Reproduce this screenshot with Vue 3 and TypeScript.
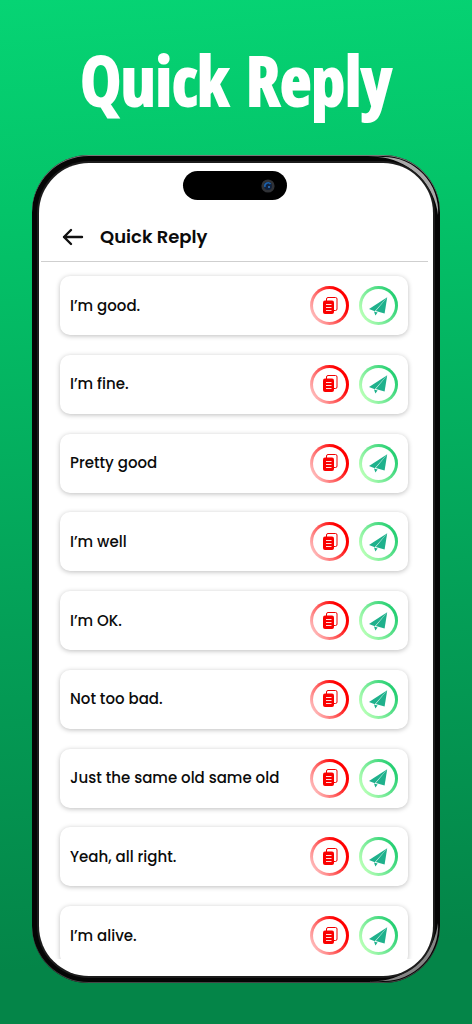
<script setup lang="ts">
import { ref } from 'vue'

const replies: string[] = [
  'I’m good.',
  'I’m fine.',
  'Pretty good',
  'I’m well',
  'I’m OK.',
  'Not too bad.',
  'Just the same old same old',
  'Yeah, all right.',
  'I’m alive.',
]

const selected = ref<string | null>(null)

function copyReply(text: string): void {
  selected.value = text
  void navigator.clipboard?.writeText(text)
}

function sendReply(text: string): void {
  selected.value = text
}
</script>

<template>
  <main class="page">
    <h1 class="headline">Quick Reply</h1>

    <section class="phone">
      <svg class="glare glare-top" viewBox="0 0 72 72" aria-hidden="true">
        <path d="M0 1L15 2A54.5 54.5 0 0 1 70 60A66 66 0 0 0 15 2.5Z" fill="#a8a8a8" />
      </svg>
      <svg class="glare glare-bottom" viewBox="0 0 72 72" aria-hidden="true">
        <path d="M0 1L15 2A54.5 54.5 0 0 1 70 60A66 66 0 0 0 15 2.5Z" fill="#858585" />
      </svg>

      <div class="screen">
        <div class="island">
          <svg class="lens" viewBox="0 0 14 14" aria-hidden="true">
            <circle cx="7" cy="7" r="6.6" fill="#303236" />
            <circle cx="7" cy="7" r="4" fill="#10213c" />
            <path d="M4 8A3.2 3.2 0 0 1 9.5 5" fill="none" stroke="#1c62ae" stroke-width="1.6" />
            <circle cx="8" cy="8" r="1" fill="#3279c4" />
          </svg>
        </div>

        <header class="bar">
          <button class="back" type="button" aria-label="Back">
            <svg viewBox="0 0 22 18" aria-hidden="true">
              <path
                d="M20 9H2M9 2L2 9L9 16"
                fill="none"
                stroke="#111"
                stroke-width="2.4"
                stroke-linecap="round"
                stroke-linejoin="round"
              />
            </svg>
          </button>
          <h2 class="title">Quick Reply</h2>
        </header>

        <div class="scroller">
          <ul class="list">
            <li v-for="reply in replies" :key="reply" class="card">
              <span class="text">{{ reply }}</span>
              <button
                class="action copy"
                type="button"
                :aria-label="`Copy ${reply}`"
                @click="copyReply(reply)"
              >
                <svg viewBox="0 0 20 20" aria-hidden="true">
                  <rect x="6.5" y="1.5" width="10.5" height="13" rx="1.5" fill="#fff" stroke="#f00000" />
                  <rect x="3" y="4.5" width="11" height="13.5" rx="2" fill="#fa0000" />
                  <path d="M6 8.5H11.5M6 11.5H11.5M6 14.5H11.5" stroke="#ffdede" stroke-width="1.1" />
                </svg>
              </button>
              <button
                class="action send"
                type="button"
                :aria-label="`Send ${reply}`"
                @click="sendReply(reply)"
              >
                <svg viewBox="0 0 20 20" aria-hidden="true">
                  <path d="M18.2 1.2L0 13L5.8 15.2Z" fill="#1fb18c" />
                  <path d="M18.2 1.2L6.8 15L15.6 17.6Z" fill="#1fb18c" />
                  <path d="M5 15.6L8.6 16.6L6.4 19.4Z" fill="#1fb18c" />
                </svg>
              </button>
            </li>
          </ul>
        </div>
      </div>
    </section>
  </main>
</template>

<style>
body {
  margin: 0;
}
</style>

<style scoped>
.page {
  box-sizing: border-box;
  min-height: 100vh;
  display: flex;
  flex-direction: column;
  padding: 38px 32px 41px;
  background: linear-gradient(176deg, #06d474 0%, #04c469 20%, #049f57 60%, #048548 92%, #048548 100%);
  font-family: Poppins, Inter, "Open Sans", sans-serif;
  color: #0b0b0b;
}

.headline {
  margin: 0 0 33px;
  font-family: "Open Sans Condensed", "Liberation Sans Narrow", "Noto Sans", sans-serif;
  font-size: 68px;
  line-height: 84px;
  font-weight: 700;
  text-align: center;
  white-space: nowrap;
  color: #fff;
  -webkit-text-stroke: 2px #fff;
}

.phone {
  position: relative;
  flex: 1;
  display: flex;
  box-sizing: border-box;
  padding: 8px 7px 7px;
  border-radius: 57px;
  background: #050505;
  box-shadow: inset 0 1px 0 #777, inset 0 -1px 0 #444;
}

.glare {
  position: absolute;
  right: 0;
  width: 72px;
  height: 72px;
}

.glare-top {
  top: 0;
}

.glare-bottom {
  bottom: 0;
  transform: scaleY(-1);
}

.screen {
  position: relative;
  flex: 1;
  min-width: 0;
  display: flex;
  flex-direction: column;
  box-sizing: border-box;
  padding: 50px 5px 17px 2px;
  border-radius: 50px;
  background: #fff;
  box-shadow: 0 0 0 2px #1c1c1c;
}

.island {
  position: absolute;
  top: 8px;
  left: 0;
  right: 2px;
  display: flex;
  align-items: center;
  justify-content: flex-end;
  box-sizing: border-box;
  width: 104px;
  height: 29px;
  margin: 0 auto;
  padding-right: 12px;
  border-radius: 15px;
  background: #000;
}

.lens {
  width: 14px;
  height: 14px;
}

.bar {
  display: flex;
  align-items: center;
  gap: 16px;
  height: 48px;
  padding: 0 21px;
  border-bottom: 1px solid #cfcfcf;
}

.back {
  display: flex;
  padding: 0;
  border: 0;
  background: none;
}

.back svg {
  width: 22px;
  height: 18px;
}

.title {
  margin: 0;
  font-size: 18px;
  line-height: 24px;
  font-weight: 600;
}

.scroller {
  flex: 1;
  display: flex;
  padding: 14px 20px 0 19px;
  overflow: hidden;
}

.list {
  flex: 1;
  display: flex;
  flex-direction: column;
  justify-content: space-between;
  gap: 19px;
  margin: 0 0 -6px;
  padding: 0;
  list-style: none;
}

.card {
  display: flex;
  align-items: center;
  gap: 10px;
  box-sizing: border-box;
  height: 59px;
  padding: 0 10px;
  border-radius: 10px;
  background: #fff;
  box-shadow: 0 1px 5px rgba(0, 0, 0, 0.26);
}

.text {
  flex: 1;
  font-size: 15px;
  line-height: 20px;
  font-weight: 500;
}

.action {
  display: flex;
  align-items: center;
  justify-content: center;
  box-sizing: border-box;
  width: 39px;
  height: 39px;
  padding: 0;
  border: 3px solid transparent;
  border-radius: 50%;
}

.action svg {
  width: 20px;
  height: 20px;
}

.copy {
  background:
    linear-gradient(#fff, #fff) padding-box,
    linear-gradient(60deg, #ffc4c4 10%, #ff0000 75%) border-box;
}

.send {
  background:
    linear-gradient(#fff, #fff) padding-box,
    linear-gradient(60deg, #b4ffb4 15%, #25cf72 85%) border-box;
}
</style>
